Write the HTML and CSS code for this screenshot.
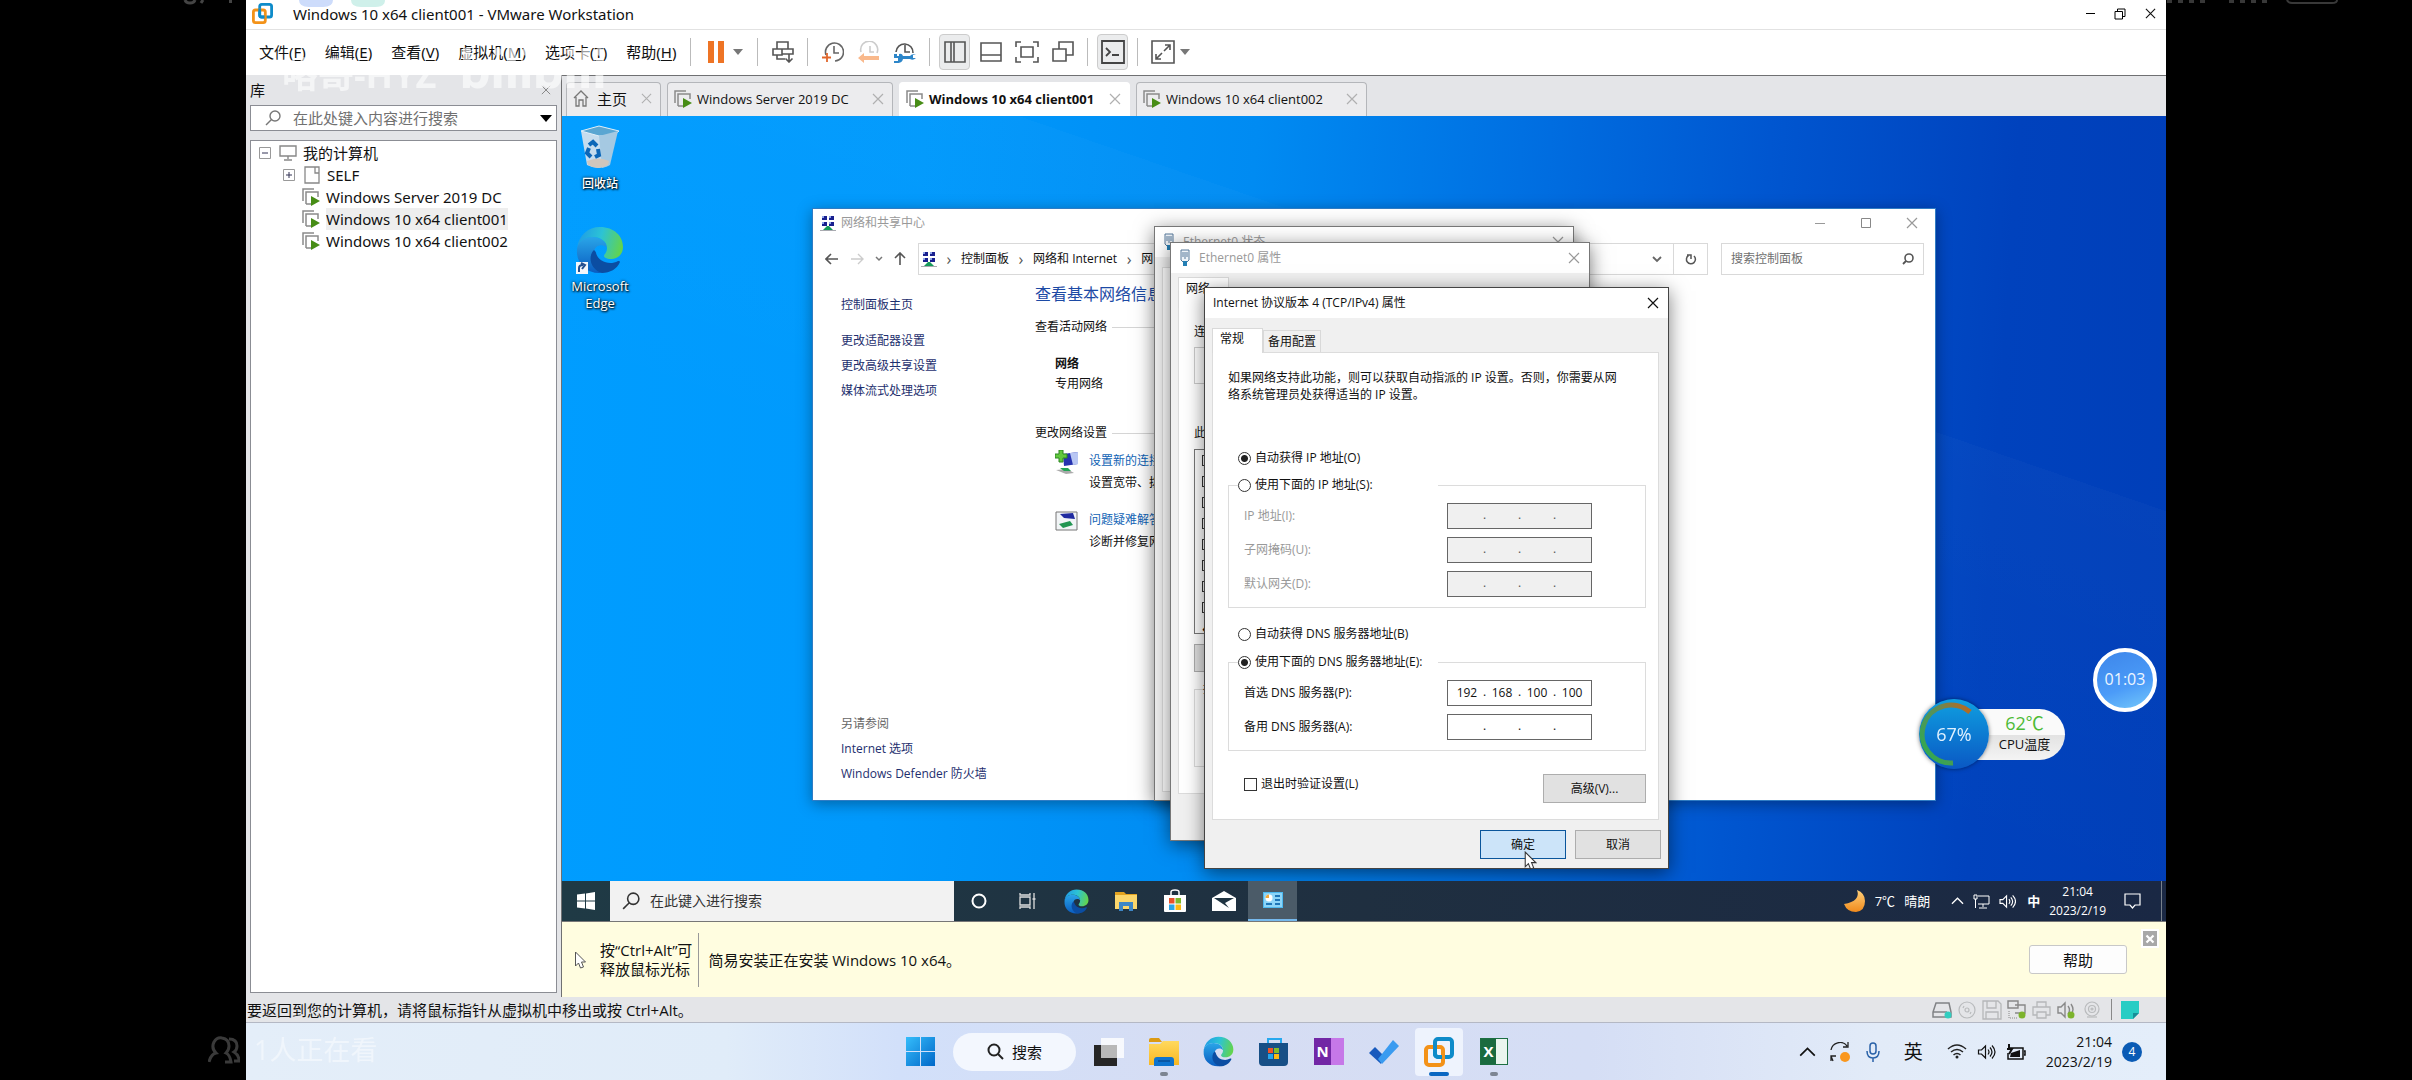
FILE: index.html
```html
<!DOCTYPE html>
<html lang="zh-CN">
<head>
    <meta charset="UTF-8">
    <meta name="viewport" content="width=device-width, initial-scale=1.0">
    <title>Windows 10 x64 client001 - VMware Workstation</title>
    <link rel="stylesheet" href="styles.css">
</head>
<body>

    <!-- Shared icons -->
    <svg class="defs" aria-hidden="true">
        <defs>
            <linearGradient id="edgeTop" x1="0" y1="0.3" x2="1" y2="0.5">
                <stop offset="0" stop-color="#1f9be6"/><stop offset="0.5" stop-color="#2cc3d5"/><stop offset="1" stop-color="#63d44c"/>
            </linearGradient>
            <linearGradient id="edgeSide" x1="0" y1="0" x2="0" y2="1">
                <stop offset="0" stop-color="#2aa5e8"/><stop offset="1" stop-color="#0a5cc0"/>
            </linearGradient>
            <linearGradient id="winBlue" x1="0" y1="0" x2="1" y2="1">
                <stop offset="0" stop-color="#35bdfb"/><stop offset="1" stop-color="#0067c8"/>
            </linearGradient>
            <linearGradient id="folderGold" x1="0" y1="0" x2="0" y2="1">
                <stop offset="0" stop-color="#ffd95e"/><stop offset="1" stop-color="#f8b722"/>
            </linearGradient>
            <linearGradient id="moonGold" x1="0" y1="0" x2="0" y2="1">
                <stop offset="0" stop-color="#ffd07a"/><stop offset="1" stop-color="#f08a1c"/>
            </linearGradient>
            <linearGradient id="cpuArc" x1="1" y1="0" x2="0" y2="1">
                <stop offset="0" stop-color="#c0651c"/><stop offset="0.4" stop-color="#5a8f5a"/><stop offset="1" stop-color="#2aae4f"/>
            </linearGradient>
        </defs>
        <symbol id="edge" viewBox="0 0 48 48">
            <path fill="url(#edgeSide)" d="M1 24C1 16 8 11 16 11c9 0 15 5 15 11-3-4-12-4-13 4-1 9 6 16 14 18-3 2-6 3-9 3C10 47 0 37 1 24z"/>
            <path fill="#0b4da2" d="M18 24c-7 7-3 20 8 23 8 0 15-4 18-11 0-1-1-1-2-1-9 5-20 0-22-8 0-1-1-2-2-3z"/>
            <path fill="url(#edgeTop)" d="M1 22C3 9 12 1 24 1c14 0 23 9 23 20 0 8-6 12-12 12-5 0-7-2-7-3 0-2 3-3 3-8 0-7-7-11-14-11C9 11 3 15 1 22z"/>
        </symbol>
        <symbol id="vmware" viewBox="0 0 30 30">
            <rect x="11" y="2" width="17" height="18" rx="3" fill="none" stroke="#0e8bc9" stroke-width="4"/>
            <rect x="2" y="10" width="17" height="18" rx="3" fill="none" stroke="#f39218" stroke-width="4"/>
            <path d="M11 8v9a3 3 0 0 0 3 3h4" fill="none" stroke="#0e8bc9" stroke-width="4"/>
        </symbol>
        <symbol id="vm" viewBox="0 0 18 18">
            <path d="M1 13V1h11M4 16V4h12v5M4 16h5" fill="none" stroke="#8a8a8a" stroke-width="1.5"/>
            <path d="M9 8l9 5-9 5z" fill="#478d16"/>
        </symbol>
        <symbol id="netcenter" viewBox="0 0 16 17">
            <path d="M2 1h5v4H2zM9 1h5v4H9zM2 7h5v4H2zM9 7h5v4H9z" fill="#19208f"/>
            <path d="M2 1h2v2H2zM9 1h2v2H9zM2 7h2v2H2zM9 7h2v2H9z" fill="#8fa5e8"/>
            <path d="M7 11h2l4 4H3z" fill="#169a5a"/><path d="M0 15h16v1H0z" fill="#a8aab0"/>
        </symbol>
        <symbol id="plug" viewBox="0 0 12 18">
            <path d="M2 1h8v10l-2 2H4l-2-2z" fill="#eef3f8" stroke="#56799a"/>
            <path d="M4 3v5M6 3v7M8 3v5" stroke="#56799a"/><path d="M4 12h4v5H4z" fill="#247fb4"/>
        </symbol>
        <symbol id="close" viewBox="0 0 12 12">
            <path d="M1 1l10 10M11 1L1 11" fill="none" stroke="currentColor" stroke-width="1.2"/>
        </symbol>
        <symbol id="search" viewBox="0 0 16 16">
            <circle cx="10" cy="6" r="5" fill="none" stroke="currentColor" stroke-width="1.4"/>
            <path d="M6.500 9.500L1 15" stroke="currentColor" stroke-width="1.4"/>
        </symbol>
        <symbol id="pointer" viewBox="0 0 12 18">
            <path d="M1 1v14l3-3 2 5 3-1-2-5h4z" fill="#fff" stroke="currentColor"/>
        </symbol>
        <symbol id="volume" viewBox="0 0 18 16">
            <path d="M1 6v4h3l4 4V2L4 6z" fill="none" stroke="currentColor" stroke-width="1.2"/>
            <path d="M10.500 5.500q2 2.500 0 5M12.500 3.500q4 4.500 0 9M14.500 1.500q6 6.500 0 13" fill="none" stroke="currentColor" stroke-width="1.2"/>
        </symbol>
        <symbol id="clock" viewBox="0 0 22 22">
            <path d="M4 14A9 9 0 1 1 13 20M12 5v7h5" fill="none" stroke="currentColor" stroke-width="1.6"/>
        </symbol>
        <symbol id="up" viewBox="0 0 14 8">
            <path d="M1 7l6-6 6 6" fill="none" stroke="currentColor" stroke-width="1.4"/>
        </symbol>
    </svg>

    <main class="screen">
        <header class="titlebar">
            <svg class="app-icon"><use href="#vmware"/></svg>
            <span>Windows 10 x64 client001 - VMware Workstation</span>
            <div class="title-buttons">
                <button aria-label="最小化"><svg width="11" height="11" viewBox="0 0 11 11"><path d="M1 5.500h9" stroke="#000"/></svg></button>
                <button aria-label="还原"><svg width="12" height="12" viewBox="0 0 12 12"><path d="M1 3.500h7.500v7.500H1zM3.500 3V1H11v7.500H9" fill="none" stroke="#000"/></svg></button>
                <button aria-label="关闭"><svg width="11" height="11"><use href="#close"/></svg></button>
            </div>
        </header>

        <div class="toolbar">
            <nav class="menus">
                <button>文件(<u>F</u>)</button>
                <button>编辑(<u>E</u>)</button>
                <button>查看(<u>V</u>)</button>
                <button>虚拟机(<u>M</u>)</button>
                <button>选项卡(<u>T</u>)</button>
                <button>帮助(<u>H</u>)</button>
            </nav>
            <div class="tools">
                <button aria-label="挂起"><svg width="18" height="22"><path d="M1 0h6v22H1zM11 0h6v22h-6z" fill="#ee7425"/></svg></button>
                <button class="caret" aria-label="电源选项"></button>
            </div>
            <div class="tools">
                <button aria-label="发送按键"><svg width="22" height="22" viewBox="0 0 22 22" fill="none" stroke="#555" stroke-width="1.6"><path d="M5 8V1h11v7M1 8h9v6H1zM10 8h11v5H10zM5 14v4h8M17 13v8M13.500 17.500L17 21l3.500-3.500"/></svg></button>
            </div>
            <div class="tools">
                <button aria-label="拍摄快照"><svg width="22" height="22" viewBox="0 0 22 22"><g color="#666"><use href="#clock"/></g><path d="M5 12v9M0 16.500h9" stroke="#e0662c" stroke-width="1.8"/></svg></button>
                <button aria-label="恢复快照"><svg width="22" height="22" viewBox="0 0 22 22"><path d="M3 11A8.500 8.500 0 1 1 19 12M12 5v6h4" fill="none" stroke="#ccc" stroke-width="1.600"/><path d="M0 17l6-5v3h15v4H6v3z" fill="#f9b98c"/></svg></button>
                <button aria-label="管理快照"><svg width="22" height="22" viewBox="0 0 22 22"><path d="M2 11A8.500 8.500 0 1 1 19 12M11 4v7h5" fill="none" stroke="#555" stroke-width="1.600"/><path d="M0 13h3v2h2v-2q3-1 4 2h7q2-3 6-1h-3v3h3q-3 3-6 1H9q-1 5-9 4v-2h4v-3H0z" fill="#2d86c9"/></svg></button>
            </div>
            <div class="tools">
                <button class="selected" aria-label="显示库"><svg width="22" height="22" viewBox="0 0 22 22" fill="none" stroke="#555" stroke-width="1.6"><path d="M1 1h20v20H1zM7 1v20M10 1v20"/></svg></button>
                <button aria-label="缩略图栏"><svg width="22" height="20" viewBox="0 0 22 20" fill="none" stroke="#555" stroke-width="1.600"><path d="M1 1h20v18H1zM1 13h20"/></svg></button>
                <button aria-label="全屏"><svg width="24" height="22" viewBox="0 0 24 22" fill="none" stroke="#555" stroke-width="1.6"><path d="M1 6V1h5M18 1h5v5M23 16v5h-5M6 21H1v-5M6 6h12v10H6z"/></svg></button>
                <button aria-label="Unity"><svg width="22" height="22" viewBox="0 0 22 22" fill="none" stroke="#555" stroke-width="1.6"><path d="M1 8h13v12H1zM7 8V1h14v13h-7"/></svg></button>
            </div>
            <div class="tools">
                <button class="selected" aria-label="控制台"><svg width="24" height="24" viewBox="0 0 24 24" fill="none" stroke="#444" stroke-width="1.8"><path d="M1 1h22v22H1zM5 8l4 4-4 4M11 15h7"/></svg></button>
            </div>
            <div class="tools">
                <button aria-label="拉伸"><svg width="24" height="24" viewBox="0 0 24 24" fill="none" stroke="#555" stroke-width="1.6"><path d="M1 1h22v22H1z"/><path d="M14 5h5v5M19 5l-6 6M10 19H5v-5M5 19l6-6"/></svg></button>
                <button class="caret" aria-label="拉伸选项"></button>
            </div>
        </div>

        <div class="workspace">
            <aside class="library">
                <div class="library-head">
                    <span>库</span>
                    <button aria-label="关闭库"><svg width="10" height="10"><use href="#close"/></svg></button>
                </div>
                <label class="library-search">
                    <svg width="16" height="16"><use href="#search"/></svg>
                    <input type="text" placeholder="在此处键入内容进行搜索" aria-label="搜索库">
                    <span class="drop"></span>
                </label>
                <ul class="tree">
                    <li>
                        <svg class="box" viewBox="0 0 12 12"><path d="M.5.5h11v11H.5z" fill="#fff" stroke="#999"/><path d="M3 6h6" stroke="#335"/></svg>
                        <svg width="18" height="16" viewBox="0 0 18 16"><path d="M1 1h16v10H1zM9 11v3M5 15h8" fill="none" stroke="#888" stroke-width="1.4"/></svg>
                        <span>我的计算机</span>
                    </li>
                    <li class="sub">
                        <svg class="box" viewBox="0 0 12 12"><path d="M.5.5h11v11H.5z" fill="#fff" stroke="#999"/><path d="M3 6h6M6 3v6" stroke="#335"/></svg>
                        <svg width="18" height="18" viewBox="0 0 18 18"><path d="M2 1h14v16H2zM12 1v6h4" fill="none" stroke="#888" stroke-width="1.3"/></svg>
                        <span>SELF</span>
                    </li>
                    <li class="leaf"><svg width="18" height="18"><use href="#vm"/></svg><span>Windows Server 2019 DC</span></li>
                    <li class="leaf current"><svg width="18" height="18"><use href="#vm"/></svg><span>Windows 10 x64 client001</span></li>
                    <li class="leaf"><svg width="18" height="18"><use href="#vm"/></svg><span>Windows 10 x64 client002</span></li>
                </ul>
            </aside>

            <section class="console">
                <div class="tabs">
                    <div class="tab home">
                        <svg width="16" height="17" viewBox="0 0 16 17"><path d="M1 8l7-7 7 7M3 7v9h3v-6h4v6h3V7" fill="none" stroke="#777" stroke-width="1.3"/></svg>
                        <span>主页</span>
                        <button aria-label="关闭"><svg width="11" height="11"><use href="#close"/></svg></button>
                    </div>
                    <div class="tab server">
                        <svg width="18" height="18"><use href="#vm"/></svg>
                        <span>Windows Server 2019 DC</span>
                        <button aria-label="关闭"><svg width="12" height="12"><use href="#close"/></svg></button>
                    </div>
                    <div class="tab active">
                        <svg width="18" height="18"><use href="#vm"/></svg>
                        <span>Windows 10 x64 client001</span>
                        <button aria-label="关闭"><svg width="12" height="12"><use href="#close"/></svg></button>
                    </div>
                    <div class="tab">
                        <svg width="18" height="18"><use href="#vm"/></svg>
                        <span>Windows 10 x64 client002</span>
                        <button aria-label="关闭"><svg width="12" height="12"><use href="#close"/></svg></button>
                    </div>
                </div>

                <div class="desktop">
                    <div class="shortcut">
                        <svg width="42" height="46" viewBox="0 0 42 46">
                            <path d="M2 6l6 34q12 6 22 0l8-34-18 4z" fill="#c5dcee"/>
                            <path d="M2 6l18-5 20 5-6 5H20z" fill="#5aa6d2" stroke="#e2eff8"/>
                            <path d="M20 11l3 32q5-1 8-3l8-34z" fill="#a5c9e2"/>
                            <path d="M8 36q12-5 22 0l-1 4q-10 6-20 0z" fill="#cfc6bd"/>
                            <path d="M10 20l4-3 4 4M19 24l1 6-4 2M12 32l-4-4 2-5" fill="none" stroke="#0c67b8" stroke-width="4"/>
                        </svg>
                        <span>回收站</span>
                    </div>
                    <div class="shortcut edge">
                        <svg width="50" height="50" viewBox="0 0 50 50"><use href="#edge" x="1" y="0" width="48" height="48"/><path d="M1 36h12v12H1z" fill="#f4f7fb"/><path d="M4 46v-4q0-3 4-3M6 37l4 2-3 4" fill="none" stroke="#26508f" stroke-width="2"/></svg>
                        <span>Microsoft Edge</span>
                    </div>

                    <section class="window network">
                        <div class="window-title">
                            <svg width="16" height="17"><use href="#netcenter"/></svg>
                            <span>网络和共享中心</span>
                            <button aria-label="最小化"><svg width="11" height="11" viewBox="0 0 11 11"><path d="M0 5.500h10" stroke="#999"/></svg></button>
                            <button aria-label="最大化"><svg width="11" height="11" viewBox="0 0 11 11"><path d="M.5.5h9v9h-9z" fill="none" stroke="#888"/></svg></button>
                            <button aria-label="关闭"><svg width="12" height="12"><use href="#close"/></svg></button>
                        </div>
                        <div class="address-row">
                            <div class="history">
                                <svg width="14" height="12" viewBox="0 0 14 12"><path d="M13 6H1M6 1L1 6l5 5" fill="none" stroke="#555" stroke-width="1.6"/></svg>
                                <svg width="14" height="12" viewBox="0 0 14 12"><path d="M1 6h12M8 1l5 5-5 5" fill="none" stroke="#ccc" stroke-width="1.400"/></svg>
                                <svg width="8" height="6" viewBox="0 0 8 6"><path d="M1 1l3 3 3-3" fill="none" stroke="#777" stroke-width="1.500"/></svg>
                                <svg width="12" height="14" viewBox="0 0 12 14"><path d="M6 13V1M1 6l5-5 5 5" fill="none" stroke="#555" stroke-width="1.6"/></svg>
                            </div>
                            <div class="address">
                                <svg width="16" height="17"><use href="#netcenter"/></svg>
                                <i>›</i><span>控制面板</span><i>›</i><span>网络和 Internet</span><i>›</i><span>网</span>
                                <svg class="more" width="10" height="8" viewBox="0 0 10 8"><path d="M1 2l4 4 4-4" fill="none" stroke="#666" stroke-width="1.8"/></svg>
                                <button aria-label="刷新"><svg width="12" height="13" viewBox="0 0 12 13"><path d="M3.500 2.500A4.500 4.500 0 1 0 9 3M2 2h4v4" fill="none" stroke="#555" stroke-width="1.5"/></svg></button>
                            </div>
                            <label class="panel-search">
                                <input type="text" placeholder="搜索控制面板" aria-label="搜索控制面板">
                                <svg width="12" height="12" viewBox="0 0 12 12"><circle cx="7" cy="5" r="4" fill="none" stroke="#555" stroke-width="1.600"/><path d="M4 8l-3 3" stroke="#555" stroke-width="1.800"/></svg>
                            </label>
                        </div>
                        <div class="window-body">
                            <nav class="side-links">
                                <a href="#">控制面板主页</a>
                                <a class="first" href="#">更改适配器设置</a>
                                <a href="#">更改高级共享设置</a>
                                <a href="#">媒体流式处理选项</a>
                                <span class="see-also">另请参阅</span>
                                <a href="#">Internet 选项</a>
                                <a href="#">Windows Defender 防火墙</a>
                            </nav>
                            <div class="overview">
                                <h1>查看基本网络信息</h1>
                                <h2>查看活动网络</h2>
                                <div class="active-network"><strong>网络</strong><span>专用网络</span></div>
                                <h2>更改网络设置</h2>
                                <div class="task">
                                    <svg width="24" height="24" viewBox="0 0 24 24"><path d="M8 4l15-2v12l-14 2z" fill="#2633b0"/><path d="M15 3l8-1v12l-5 1z" fill="#b8c6f3"/><path d="M1 20l11-1 7 4-8 1z" fill="#aaa"/><path d="M5 18l8 0 3 3-7 0z" fill="#23a455"/><path d="M4 0h4v4h4v4H8v4H4V8H0V4h4z" fill="#62c83e" stroke="#2c8622"/></svg>
                                    <div><a href="#">设置新的连接</a><span>设置宽带、拨</span></div>
                                </div>
                                <div class="task">
                                    <svg width="24" height="24" viewBox="0 0 24 24"><path d="M1 3h21v18H1z" fill="#f2f5f7" stroke="#777"/><path d="M5 5l13-1 2 6-11-1z" fill="#202ba0"/><path d="M4 15l11-3 3 4-10 3z" fill="#229652"/></svg>
                                    <div><a href="#">问题疑难解答</a><span>诊断并修复网</span></div>
                                </div>
                            </div>
                        </div>
                    </section>

                    <section class="window dialog status-dialog">
                        <div class="window-title">
                            <svg width="12" height="18"><use href="#plug"/></svg>
                            <span>Ethernet0 状态</span>
                            <button aria-label="关闭"><svg width="12" height="12"><use href="#close"/></svg></button>
                        </div>
                        <div class="sheet"></div>
                    </section>

                    <section class="window dialog adapter-dialog">
                        <div class="window-title">
                            <svg width="12" height="18"><use href="#plug"/></svg>
                            <span>Ethernet0 属性</span>
                            <button aria-label="关闭"><svg width="12" height="12"><use href="#close"/></svg></button>
                        </div>
                        <div class="sheet-tabs"><button class="on">网络</button></div>
                        <div class="sheet">
                            <span>连</span>
                            <div class="adapter-name"></div>
                            <span>此</span>
                            <div class="components">
                                <input type="checkbox" checked aria-label="组件 1">
                                <input type="checkbox" checked aria-label="组件 2">
                                <input type="checkbox" checked aria-label="组件 3">
                                <input type="checkbox" checked aria-label="组件 4">
                                <input type="checkbox" aria-label="组件 5">
                                <input type="checkbox" checked aria-label="组件 6">
                                <input type="checkbox" checked aria-label="组件 7">
                                <input type="checkbox" checked aria-label="组件 8">
                                <b>‹</b>
                            </div>
                            <div class="install"></div>
                            <fieldset class="describe"><legend>描</legend></fieldset>
                        </div>
                    </section>

                    <section class="window dialog ipv4-dialog">
                        <div class="window-title">
                            <span>Internet 协议版本 4 (TCP/IPv4) 属性</span>
                            <button aria-label="关闭"><svg width="12" height="12"><use href="#close"/></svg></button>
                        </div>
                        <div class="sheet-tabs">
                            <button class="on">常规</button>
                            <button>备用配置</button>
                        </div>
                        <form class="sheet">
                            <p>如果网络支持此功能，则可以获取自动指派的 IP 设置。否则，你需要从网络系统管理员处获得适当的 IP 设置。</p>
                            <label class="choice auto-ip"><input type="radio" name="ip" checked>自动获得 IP 地址(O)</label>
                            <fieldset>
                                <legend><label class="choice"><input type="radio" name="ip">使用下面的 IP 地址(S):</label></legend>
                                <div class="field off">
                                    <label for="ip1">IP 地址(I):</label>
                                    <div class="ip"><input id="ip1" disabled>.<input disabled aria-label="IP 2">.<input disabled aria-label="IP 3">.<input disabled aria-label="IP 4"></div>
                                </div>
                                <div class="field off">
                                    <label for="mask1">子网掩码(U):</label>
                                    <div class="ip"><input id="mask1" disabled>.<input disabled aria-label="掩码 2">.<input disabled aria-label="掩码 3">.<input disabled aria-label="掩码 4"></div>
                                </div>
                                <div class="field off">
                                    <label for="gw1">默认网关(D):</label>
                                    <div class="ip"><input id="gw1" disabled>.<input disabled aria-label="网关 2">.<input disabled aria-label="网关 3">.<input disabled aria-label="网关 4"></div>
                                </div>
                            </fieldset>
                            <label class="choice auto-dns"><input type="radio" name="dns">自动获得 DNS 服务器地址(B)</label>
                            <fieldset>
                                <legend><label class="choice"><input type="radio" name="dns" checked>使用下面的 DNS 服务器地址(E):</label></legend>
                                <div class="field">
                                    <label for="dns1">首选 DNS 服务器(P):</label>
                                    <div class="ip"><input id="dns1" value="192">.<input value="168" aria-label="首选 2">.<input value="100" aria-label="首选 3">.<input value="100" aria-label="首选 4"></div>
                                </div>
                                <div class="field">
                                    <label for="alt1">备用 DNS 服务器(A):</label>
                                    <div class="ip"><input id="alt1">.<input aria-label="备用 2">.<input aria-label="备用 3">.<input aria-label="备用 4"></div>
                                </div>
                            </fieldset>
                            <div class="extra">
                                <label class="choice"><input type="checkbox">退出时验证设置(L)</label>
                                <button type="button" class="push">高级(V)...</button>
                            </div>
                        </form>
                        <div class="actions">
                            <button class="push default">确定</button>
                            <button class="push">取消</button>
                        </div>
                        <svg class="cursor" width="13" height="19"><use href="#pointer"/></svg>
                    </section>

                    <div class="cpu-meter">
                        <div class="cpu-ball">
                            <svg viewBox="0 0 70 70"><path d="M51 13A29 29 0 1 0 34 64" fill="none" stroke="url(#cpuArc)" stroke-width="5"/></svg>
                            <span>67%</span>
                        </div>
                        <div class="cpu-temp"><b>62℃</b><span>CPU温度</span></div>
                    </div>
                    <div class="timer">01:03</div>
                </div>

                <div class="guest-bar">
                    <button class="start" aria-label="开始"><svg width="18" height="18" viewBox="0 0 18 18"><path d="M0 2.500L8 1.500V8.500H0zM9 1.400L18 0v8.500H9zM0 9.500h8v7L0 15.500zM9 9.500h9V18l-9-1.400z" fill="#fff"/></svg></button>
                    <label class="guest-search">
                        <svg width="18" height="18"><use href="#search"/></svg>
                        <input type="text" placeholder="在此键入进行搜索" aria-label="在此键入进行搜索">
                    </label>
                    <button class="pin" aria-label="Cortana"><svg width="16" height="16"><circle cx="8" cy="8" r="6.500" fill="none" stroke="#fff" stroke-width="2"/></svg></button>
                    <button class="pin" aria-label="任务视图"><svg width="18" height="18" viewBox="0 0 18 18"><path d="M1 5h10v8H1zM1 1v2h10V1M1 17v-2h10v2M15 1v16M13.500 7h3" fill="none" stroke="#ddd" stroke-width="1.300"/></svg></button>
                    <button class="pin" aria-label="Edge"><svg width="25" height="25"><use href="#edge"/></svg></button>
                    <button class="pin" aria-label="文件资源管理器"><svg width="22" height="20" viewBox="0 0 22 20"><path d="M0 1h9l2 2h11v15H0z" fill="#e3a320"/><path d="M0 4h22v14H0z" fill="#fbd66b"/><path d="M4 20v-9h14v9h-4v-5H8v5z" fill="#3d86c6"/></svg></button>
                    <button class="pin" aria-label="Microsoft Store"><svg width="24" height="24" viewBox="0 0 24 24"><path d="M8 7V3q0-2 4-2t4 2v4" fill="none" stroke="#fff" stroke-width="1.5"/><path d="M1 6h22v16q0 1-1 1H2q-1 0-1-1z" fill="#fff"/><path d="M6 9h5.500v5.500H6z" fill="#e8502a"/><path d="M12.500 9H18v5.500h-5.500z" fill="#7db82b"/><path d="M6 15.500h5.500V21H6z" fill="#29a4e6"/><path d="M12.500 15.500H18V21h-5.500z" fill="#fbb812"/></svg></button>
                    <button class="pin" aria-label="邮件"><svg width="24" height="20" viewBox="0 0 24 20"><path d="M0 7l12-7 12 7v13H0z" fill="#fff"/><path d="M2 7h20l-9 5 4 5-6-4z" fill="#1f3442"/></svg></button>
                    <button class="pin running" aria-label="控制面板"><svg width="20" height="16" viewBox="0 0 20 16"><path d="M0 0h20v16H0z" fill="#4db9f0"/><path d="M1 1h18v14H1z" fill="#8cd4f7"/><circle cx="6" cy="6" r="3.500" fill="#fff"/><path d="M6 6V2.500A3.500 3.500 0 0 0 2.500 6z" fill="#f5a93a"/><path d="M12 3h5v2h-5zM12 7h5v2h-5zM12 11h5v2h-5zM3 11h6v2H3z" fill="#1e76b8"/></svg></button>
                    <div class="guest-tray">
                        <svg width="23" height="23" viewBox="0 0 23 23"><path d="M14 0q4 11-13 14 3 8 12 8 9-1 9-11 0-8-8-11z" fill="url(#moonGold)"/></svg>
                        <span class="weather">7℃</span><span>晴朗</span>
                        <svg class="tray-up" width="13" height="8"><use href="#up"/></svg>
                        <svg width="17" height="15" viewBox="0 0 17 15"><path d="M5 2h11v8H5M10 10v3M6 14h8M1 1h3v4H1zM2.500 5v9" fill="none" stroke="#fff"/></svg>
                        <svg width="17" height="15"><use href="#volume"/></svg>
                        <span class="ime">中</span>
                        <time>21:04<br>2023/2/19</time>
                        <svg width="17" height="17" viewBox="0 0 17 17"><path d="M1 1h15v11h-5l-2.500 3L6 12H1z" fill="none" stroke="#fff" stroke-width="1.200"/></svg>
                    </div>
                </div>

                <div class="notice">
                    <svg class="arrow" width="13" height="18"><use href="#pointer"/></svg>
                    <p class="release">按“Ctrl+Alt”可<br>释放鼠标光标</p>
                    <p>简易安装正在安装 Windows 10 x64。</p>
                    <button class="help">帮助</button>
                    <button class="dismiss" aria-label="关闭"><svg width="10" height="10" viewBox="0 0 10 10"><path d="M1.500 1.500l7 7M8.500 1.500l-7 7" stroke="#fff" stroke-width="2.200"/></svg></button>
                </div>
            </section>
        </div>

        <footer class="statusbar">
            <span>要返回到您的计算机，请将鼠标指针从虚拟机中移出或按 Ctrl+Alt。</span>
            <div class="devices">
                <svg width="20" height="18" viewBox="0 0 20 18"><path d="M4 2h13l2 9v5H1v-5zM1 11h14" fill="none" stroke="#808285" stroke-width="1.500"/><circle cx="16" cy="14" r="3.500" fill="#31cdbf"/></svg>
                <svg width="20" height="18" viewBox="0 0 20 18" fill="none" stroke="#b9bbbd" stroke-width="1.200"><circle cx="10" cy="9" r="8"/><circle cx="10" cy="9" r="2"/><path d="M6 7l1-2M13 13l1-2"/></svg>
                <svg width="20" height="20" viewBox="0 0 20 20" fill="none" stroke="#b5b7b9" stroke-width="1.300"><path d="M1 1h15l3 3v15H1zM5 1v7h9V1M4 19v-7h12v7"/></svg>
                <svg width="20" height="20" viewBox="0 0 20 20"><path d="M1 1h10v7H1zM8 5h10v8H8" fill="none" stroke="#888" stroke-width="1.400"/><path d="M2 11v7h8" fill="none" stroke="#888" stroke-dasharray="1 1"/><circle cx="15" cy="15" r="3.500" fill="#7db32c"/></svg>
                <svg width="20" height="18" viewBox="0 0 20 18" fill="none" stroke="#b5b7b9" stroke-width="1.300"><path d="M5 6V1h9v5M5 14H1V6h17v8h-4M5 11h9v6H5z"/></svg>
                <svg width="20" height="18" viewBox="0 0 20 18"><path d="M1 6v6h3l4 4V2L4 6zM11 5q3 4 0 8M14 3q4 6 0 10" fill="none" stroke="#888" stroke-width="1.400"/><circle cx="14" cy="14" r="3.500" fill="#7db32c"/></svg>
                <svg width="20" height="18" viewBox="0 0 20 18" fill="none" stroke="#b9bbbd" stroke-width="1.200"><circle cx="10" cy="8" r="7"/><circle cx="10" cy="8" r="3.500"/><circle cx="10" cy="8" r="1"/><path d="M5 16h10"/></svg>
                <i></i>
                <svg width="18" height="18" viewBox="0 0 18 18"><path d="M0 0h18v12l-6 6H0z" fill="#27cdc4"/><path d="M12 18v-6h6z" fill="#188f98"/></svg>
            </div>
        </footer>

        <footer class="host-bar">
            <div class="host-apps">
                <button class="app" aria-label="开始"><svg width="30" height="30" viewBox="0 0 30 30"><path d="M0 0h14v14H0zM15 0h14v14H15zM0 15h14v14H0zM15 15h14v14H15z" fill="url(#winBlue)"/></svg></button>
                <button class="host-search"><svg width="17" height="17" viewBox="0 0 17 17"><circle cx="7" cy="7" r="5.500" fill="none" stroke="#222" stroke-width="2"/><path d="M11 11l5 5" stroke="#222" stroke-width="2"/></svg>搜索</button>
                <button class="app" aria-label="任务视图"><svg width="30" height="28" viewBox="0 0 30 28"><path d="M0 7h23v21H0z" fill="#262626"/><path d="M7 0h23v20H7z" fill="#fff" fill-opacity=".8"/><path d="M7 7h16v13H7z" fill="#b8b8b8"/></svg></button>
                <button class="app dot" aria-label="文件资源管理器"><svg width="30" height="28" viewBox="0 0 30 28"><path d="M0 2q0-2 2-2h8l3 4H0z" fill="#dc9a12"/><path d="M0 6h11l3-3h16v24H0z" fill="url(#folderGold)"/><path d="M5 28v-6q0-3 3-3h14q3 0 3 3v6z" fill="#0e74cf"/><path d="M9 23h12" stroke="#0a4f97" stroke-width="1.500"/></svg></button>
                <button class="app" aria-label="Edge"><svg width="31" height="31"><use href="#edge"/></svg></button>
                <button class="app" aria-label="Microsoft Store"><svg width="30" height="30" viewBox="0 0 30 30"><path d="M9 7V2h13v5" fill="none" stroke="#27a8ee" stroke-width="2"/><path d="M0 6h29v19q0 4-4 4H4q-4 0-4-4z" fill="#174f86"/><path d="M9 11h5v5H9z" fill="#ef5327"/><path d="M15 11h5v5h-5z" fill="#80bb2a"/><path d="M9 17h5v5H9z" fill="#25a5ec"/><path d="M15 17h5v5h-5z" fill="#fdb913"/></svg></button>
                <button class="app" aria-label="OneNote"><span class="onenote">N</span></button>
                <button class="app" aria-label="To Do"><svg width="30" height="24" viewBox="0 0 30 24"><path d="M0 13l6-6 8 8-2 9z" fill="#185abd"/><path d="M9 19L24 0l6 6-17 18z" fill="#3a9bf0"/></svg></button>
                <button class="app open" aria-label="VMware"><svg width="30" height="30"><use href="#vmware"/></svg></button>
                <button class="app dot" aria-label="Excel"><span class="excel">X</span></button>
            </div>
            <div class="host-tray">
                <svg width="17" height="10"><use href="#up"/></svg>
                <svg width="20" height="20" viewBox="0 0 20 20"><path d="M1 8a9 9 0 0 1 16-4M18 0v5h-5M1 14l2 5M1 19v-5h5" fill="none" stroke="#222" stroke-width="1.300"/><circle cx="15" cy="15" r="5" fill="#f9971e"/></svg>
                <svg width="14" height="20" viewBox="0 0 14 20"><rect x="4" y="1" width="6" height="11" rx="3" fill="none" stroke="#2a62a8" stroke-width="1.500"/><path d="M1 9q0 7 6 7t6-7M7 16v4" fill="none" stroke="#2a62a8" stroke-width="1.500"/></svg>
                <span class="ime">英</span>
                <svg width="20" height="15" viewBox="0 0 20 15"><path d="M1 5q9-8 18 0M4 8q6-5 12 0M6.500 11q3.500-3 7 0" fill="none" stroke="#222" stroke-width="1.500"/><circle cx="10" cy="13" r="1.500" fill="#222"/></svg>
                <svg width="19" height="16"><use href="#volume"/></svg>
                <svg width="20" height="16" viewBox="0 0 20 16"><path d="M3 4h14v11H2V9M18 7h1v4h-1" fill="none" stroke="#111" stroke-width="1.500"/><path d="M5 9l9-3v7H4z" fill="#111"/><path d="M3 0v4M1 5h5l-3 5" stroke="#111" stroke-width="2" fill="none"/></svg>
                <time>21:04<br>2023/2/19</time>
                <span class="badge">4</span>
            </div>
        </footer>
    </main>

    <!-- Live stream overlay, lies over the shared screen -->
    <div class="overlay" aria-hidden="true">
        <span class="streamer">咯哥-HYZ</span>
        <span class="brand">bilibili</span>
        <span class="viewers">
            <svg width="32" height="30" viewBox="0 0 32 30"><path d="M1 27q2-8 7-9-5-5-2-11 3-5 8-4 7 1 7 8 0 4-3 7 4 2 5 9h-6M21 4q8 0 8 7 0 4-3 6 5 3 5 9h-5" fill="none" stroke="#3a3a3a" stroke-width="3"/></svg>
            1人正在看
        </span>
        <svg class="phone-left" width="220" height="12" viewBox="0 0 220 12">
            <path d="M2 0q1 3 5 3t5-3M18 3l2-3" fill="none" stroke="#444" stroke-width="3"/><path d="M46 0h3v3h-3z" fill="#444"/>
            <path d="M116 0h34q0 7-10 7h-14q-10 0-10-7z" fill="#cddcfb"/><path d="M168 0h34q0 7-10 7h-14q-10 0-10-7z" fill="#cff0ea"/>
        </svg>
        <svg class="phone-right" width="172" height="5" viewBox="0 0 172 5">
            <path d="M0 0h5v3H0zM11 0h5v3h-5zM22 0h5v3h-5zM33 0h5v3h-5zM62 0h5v3h-5zM73 0h5v3h-5zM84 0h5v3h-5zM95 0h5v3h-5z" fill="#383838"/>
            <path d="M120 0q1 3 5 3h40q5 0 5-3" fill="none" stroke="#383838" stroke-width="2"/>
        </svg>
    </div>

</body>
</html>
```
FILE: styles.css
```css
:root {
    --chrome: #e4e5e8;
    --line: #8b8d94;
    --dialog: #f0f0f0;
    --link: #0f63b5;
    --nav: #1e2f6e;
    --ui: "Open Sans", "Noto Sans CJK SC", sans-serif;
    --ui-wide: "Noto Sans", "Noto Sans CJK SC", sans-serif;
}

* {
    box-sizing: border-box;
}

html, body {
    height: 100%;
    margin: 0;
}

body {
    display: grid;
    grid-template-columns: 246px 1fr 246px;
    background: #000;
    color: #111;
    font-family: var(--ui);
    font-size: 15px;
    line-height: 20px;
    overflow: hidden;
}

button, input {
    font: inherit;
    color: inherit;
    margin: 0;
    padding: 0;
    border: 0;
    background: none;
    border-radius: 0;
    outline: none;
}

button {
    display: flex;
    align-items: center;
    justify-content: center;
}

input {
    min-width: 0;
}

p, h1, h2, ul {
    margin: 0;
    padding: 0;
}

svg {
    display: block;
    flex-shrink: 0;
}

a {
    color: inherit;
    text-decoration: none;
}

.defs {
    position: absolute;
    width: 0;
    height: 0;
}

.screen {
    grid-column: 2;
    display: flex;
    flex-direction: column;
    height: 100vh;
    min-width: 0;
    background: #fff;
}

/* VMware window */
.titlebar {
    display: flex;
    align-items: center;
    height: 30px;
    padding: 0 1px 2px 6px;
    border-bottom: 1px solid #e2e2e2;
    font-family: var(--ui-wide);
}

.app-icon {
    width: 21px;
    height: 21px;
    margin-right: 20px;
}

.title-buttons {
    display: flex;
    margin-left: auto;
}

.title-buttons button {
    width: 30px;
    height: 26px;
}

.toolbar {
    display: flex;
    align-items: center;
    height: 45px;
    padding: 0 0 2px 13px;
}

.menus {
    display: flex;
    gap: 19px;
    margin-right: 14px;
    font-family: var(--ui-wide);
}

.menus u {
    text-underline-offset: 2px;
}

.tools {
    display: flex;
    align-items: center;
    gap: 5px;
    height: 28px;
    padding: 0 9px;
    border-left: 1px solid #bbb;
}

.tools button {
    width: 31px;
    height: 36px;
}

.tools .selected {
    background: #ebeced;
    border: 1px solid #ccc;
    border-radius: 4px;
}

.tools .caret {
    width: 12px;
    margin-right: 4px;
    margin-left: -4px;
}

.caret::after,
.drop {
    content: "";
    border: 5px solid transparent;
    border-top: 6px solid #777;
    border-bottom: 0;
}

.workspace {
    flex: 1;
    display: grid;
    grid-template-columns: 315px 1fr;
    min-height: 0;
    background: var(--chrome);
}

.library {
    display: flex;
    flex-direction: column;
    padding: 0 4px 4px;
}

.library-head {
    display: flex;
    justify-content: space-between;
    align-items: center;
    height: 30px;
    padding-right: 6px;
}

.library-head button {
    color: #888;
}

.library-search {
    display: flex;
    align-items: center;
    gap: 12px;
    height: 26px;
    padding: 0 4px 0 14px;
    border: 1px solid var(--line);
    background: #fff;
    color: #777;
}

.library-search input {
    flex: 1;
}

::placeholder {
    color: #707070;
    opacity: 1;
}

.drop {
    border-width: 7px 6px 0;
    border-top-color: #000;
}

.tree {
    flex: 1;
    margin-top: 9px;
    padding: 1px 8px;
    border: 1px solid var(--line);
    background: #fff;
    font-family: var(--ui-wide);
    list-style: none;
}

.tree li {
    display: flex;
    align-items: center;
    gap: 6px;
    height: 22px;
    line-height: 22px;
    white-space: nowrap;
}

.tree .box {
    width: 12px;
    height: 12px;
    margin-right: 2px;
}

.tree .sub {
    padding-left: 24px;
}

.tree .leaf {
    padding-left: 43px;
}

.tree .current span {
    background: #eee;
}

.console {
    display: flex;
    flex-direction: column;
    min-width: 0;
    border-top: 1px solid #6f7072;
    border-left: 1px solid #6f7072;
}

.tabs {
    display: flex;
    gap: 6px;
    padding: 6px 4px 0;
    font-size: 13px;
}

.tab {
    display: flex;
    align-items: center;
    gap: 5px;
    width: 231px;
    height: 34px;
    padding: 0 8px 2px 6px;
    border: 1px solid #b4b6ba;
    border-bottom: 0;
    border-radius: 4px 4px 0 0;
    background: #ececee;
    white-space: nowrap;
}

.tab button {
    margin-left: auto;
    color: #b0b0b0;
}

.home {
    gap: 8px;
    width: 95px;
    font-size: 15px;
}

.server {
    width: 226px;
}

.active {
    background: #fff;
    border-color: #fff;
    font-weight: bold;
}

/* Guest desktop */
.desktop {
    flex: 1;
    position: relative;
    overflow: hidden;
    background:
        linear-gradient(199deg, transparent 30%, rgba(255, 255, 255, 0.02) 30%, transparent 62%),
        linear-gradient(94deg, #009dff 0%, #0099fc 22%, #008bf2 42%, #0070e2 58%, #0056d0 73%, #0042bd 88%, #003eb8 100%);
    font-size: 12px;
    line-height: 18px;
}

.shortcut {
    position: absolute;
    top: 9px;
    left: 4px;
    width: 68px;
    display: flex;
    flex-direction: column;
    align-items: center;
    gap: 4px;
    color: #fff;
    font-weight: 500;
    text-align: center;
    line-height: 17px;
    text-shadow: 1px 1px 2px #000, 0 0 3px #000;
}

.shortcut.edge {
    top: 110px;
    gap: 2px;
    font-size: 13px;
}

.window {
    position: absolute;
    display: flex;
    flex-direction: column;
    isolation: isolate;
    background: #fff;
    border: 1px solid #6b7f95;
    box-shadow: 0 3px 14px rgba(0, 0, 0, 0.35);
}

.network {
    top: 92px;
    left: 250px;
    width: 1124px;
    height: 593px;
    border-color: #2f7cc4;
}

.window-title {
    display: flex;
    align-items: center;
    height: 30px;
    flex-shrink: 0;
    padding-left: 8px;
    background: #fff;
    color: #999;
}

.window-title svg + span {
    margin-left: 5px;
}

.dialog .window-title svg + span {
    margin-left: 8px;
}

.window-title span {
    flex: 1;
}

.window-title button {
    width: 46px;
    height: 28px;
}

.network .window-title {
    padding-left: 7px;
    padding-bottom: 2px;
}

.address-row {
    display: flex;
    gap: 13px;
    height: 32px;
    margin: 4px 11px 0 12px;
}

.history {
    display: flex;
    align-items: center;
    gap: 11px;
    width: 80px;
}

.address {
    flex: 1;
    display: flex;
    align-items: center;
    padding-left: 2px;
    border: 1px solid #d9d9d9;
}

.address i {
    width: 24px;
    font-style: normal;
    font-size: 16px;
    text-align: center;
    color: #555;
}

.address .more {
    margin: 0 11px 0 auto;
}

.address button {
    width: 34px;
    height: 30px;
    border-left: 1px solid #d9d9d9;
}

.panel-search {
    display: flex;
    align-items: center;
    width: 203px;
    padding: 0 9px;
    border: 1px solid #d9d9d9;
}

.panel-search input {
    flex: 1;
}

.window-body {
    flex: 1;
    display: grid;
    grid-template-columns: 222px 1fr;
}

.side-links {
    display: flex;
    flex-direction: column;
    padding: 17px 0 14px 28px;
    line-height: 25px;
    color: var(--nav);
}

.side-links .first {
    margin-top: 11px;
}

.side-links .see-also {
    margin-top: auto;
    color: #666;
}

.overview {
    padding: 7px 300px 0 0;
}

.overview h1 {
    color: #1c4aa5;
    font-size: 16px;
    font-weight: normal;
    line-height: 24px;
}

.overview h2 {
    display: flex;
    align-items: center;
    gap: 5px;
    margin-top: 9px;
    font-size: 12px;
    font-weight: normal;
    line-height: 24px;
}

.overview h2::after {
    content: "";
    flex: 1;
    border-top: 1px solid #d5d5d5;
}

.active-network {
    display: flex;
    flex-direction: column;
    margin: 15px 0 27px 20px;
    line-height: 20px;
}

.task {
    display: flex;
    align-items: flex-start;
    gap: 10px;
    margin: 5px 0 15px 20px;
    line-height: 22px;
}

.task a,
.task span {
    display: block;
}

.task a {
    color: var(--link);
}

/* Property sheets */
.dialog {
    background: var(--dialog);
    border-color: #777;
    box-shadow: 0 4px 18px rgba(0, 0, 0, 0.5);
}

.status-dialog {
    top: 110px;
    left: 592px;
    width: 420px;
    height: 575px;
}

.adapter-dialog {
    top: 126px;
    left: 608px;
    width: 420px;
    height: 599px;
}

.ipv4-dialog {
    top: 171px;
    left: 642px;
    width: 465px;
    border-color: #444;
}

.dialog .window-title button {
    width: 30px;
}

.ipv4-dialog .window-title {
    color: #111;
}

.sheet-tabs {
    display: flex;
    align-items: flex-end;
    height: 34px;
    margin-left: 7px;
}

.sheet-tabs button {
    height: 22px;
    padding: 0 4px;
    border: 1px solid #d9d9d9;
    border-bottom: 0;
}

.sheet-tabs .on {
    width: 51px;
    height: 25px;
    margin-bottom: -1px;
    padding: 0 0 4px 7px;
    background: #fff;
    justify-content: flex-start;
    z-index: 1;
}

.adapter-dialog .on {
    height: 31px;
    padding-bottom: 9px;
}

.sheet {
    margin: 0 9px 0 7px;
    border: 1px solid #dcdcdc;
    background: #fff;
}

.status-dialog .sheet {
    flex: 1;
    margin-top: 10px;
    margin-bottom: 8px;
}

.adapter-dialog .sheet {
    display: flex;
    flex-direction: column;
    margin-bottom: 46px;
    padding: 15px 15px 26px;
    flex: 1;
}

.adapter-name {
    height: 37px;
    margin: 6px 0 40px;
    border: 1px solid #ccc;
}

.components {
    display: flex;
    flex-direction: column;
    gap: 10px;
    margin-top: 7px;
    padding: 5px 7px 0;
    border: 1px solid #777;
}

.components b {
    line-height: 10px;
    font-size: 16px;
}

.install {
    width: 100px;
    height: 28px;
    margin: 10px 0 8px;
    border: 1px solid #adadad;
    background: #e1e1e1;
}

.sheet fieldset {
    min-width: 0;
    margin: 0;
    padding: 8px 0 10px 9px;
    border: 1px solid #dcdcdc;
}

.sheet .describe {
    flex: 1;
    padding: 0 8px;
}

.ipv4-dialog .sheet {
    padding: 16px 12px 16px 15px;
}

.ipv4-dialog p {
    padding-right: 20px;
    line-height: 17px;
}

legend {
    padding: 0;
}

.ipv4-dialog legend {
    width: 200px;
    height: 20px;
    white-space: nowrap;
}

.choice {
    display: flex;
    align-items: center;
    gap: 4px;
    height: 20px;
}

input[type="radio"],
input[type="checkbox"] {
    appearance: none;
    flex-shrink: 0;
    width: 13px;
    height: 13px;
    border: 1px solid #333;
    background: #fff;
}

input[type="radio"] {
    border-radius: 50%;
}

input[type="radio"]:checked {
    background: radial-gradient(circle, #222 3px, #fff 4px);
}

.components input[type="checkbox"] {
    width: 11px;
    height: 11px;
}

.components input[type="checkbox"]:checked {
    background: radial-gradient(circle at 3px 5px, #222 1px, #fff 2px);
}

.auto-ip {
    margin: 45px 0 7px 10px;
}

.auto-dns {
    margin: 16px 0 8px 10px;
}

.field {
    display: grid;
    grid-template-columns: 203px 145px;
    align-items: center;
    margin-left: 6px;
}

.field + .field {
    margin-top: 8px;
}

.ip {
    display: flex;
    height: 26px;
    padding: 0 3px;
    border: 1px solid #666;
    line-height: 22px;
}

.ip input {
    flex: 1;
    width: 30px;
    text-align: center;
}

.off {
    color: #999;
}

.off .ip {
    background: var(--dialog);
    color: #555;
}

.extra {
    display: flex;
    justify-content: space-between;
    margin-top: 23px;
    padding-left: 16px;
}

.push {
    width: 86px;
    height: 29px;
    border: 1px solid #adadad;
    background: #e1e1e1;
}

.extra .push {
    width: 103px;
}

.push.default {
    border: 1px solid #0a559b;
    background: #cce4f9;
}

.actions {
    display: flex;
    justify-content: flex-end;
    gap: 9px;
    padding: 10px 7px 9px;
}

.cursor {
    position: absolute;
    right: 131px;
    bottom: -2px;
    color: #333;
}

/* Floating gadgets on the desktop */
.cpu-meter {
    position: absolute;
    top: 583px;
    left: 1357px;
    display: flex;
    align-items: center;
}

.cpu-ball {
    position: relative;
    z-index: 1;
    display: grid;
    place-items: center;
    width: 70px;
    height: 70px;
    border-radius: 50%;
    background: linear-gradient(#0f9fe0, #0a58c4);
    box-shadow: 0 0 4px rgba(0, 0, 0, 0.5);
    color: #dff1ff;
    font-size: 18px;
}

.cpu-ball svg,
.cpu-ball span {
    grid-area: 1 / 1;
}

.cpu-ball svg {
    width: 70px;
}

.cpu-temp {
    display: flex;
    flex-direction: column;
    justify-content: center;
    align-items: center;
    width: 105px;
    height: 51px;
    margin-left: -29px;
    padding-left: 24px;
    border-radius: 0 26px 26px 0;
    background: linear-gradient(#fafafa 50%, #e2e2e2 50%, #f4f4f4);
    font-size: 13px;
    line-height: 21px;
}

.cpu-temp b {
    color: #4dba36;
    font-size: 18px;
    font-weight: normal;
}

.timer {
    position: absolute;
    top: 532px;
    left: 1531px;
    width: 64px;
    height: 64px;
    border: 4px solid #fff;
    border-radius: 50%;
    background: linear-gradient(160deg, #3d86ea, #4b9bf8 60%, #74c8fa);
    color: #eef6ff;
    font-size: 16px;
    line-height: 54px;
    text-align: center;
}

/* Guest taskbar */
.guest-bar {
    display: flex;
    height: 41px;
    border-bottom: 1px solid #777;
    background: linear-gradient(90deg, #1f3a45, #1f2f40 50%, #1a2844);
    color: #fff;
    font-size: 13px;
}

.start {
    width: 48px;
}

.guest-search {
    display: flex;
    align-items: center;
    gap: 10px;
    width: 344px;
    padding-left: 12px;
    background: #f2f2f2;
    color: #333;
    font-size: 14px;
}

.guest-search input {
    flex: 1;
}

.guest-search ::placeholder {
    color: #333;
}

.pin {
    width: 49px;
}

.pin.running {
    border-bottom: 2px solid #76b9ed;
    background: #4b5b68;
}

.guest-tray {
    display: flex;
    align-items: center;
    gap: 9px;
    margin: 0 4px 0 auto;
    padding-right: 20px;
    border-right: 1px solid #77808c;
}

.guest-tray .tray-up {
    margin-left: 12px;
}

.guest-tray .ime {
    margin-left: 2px;
    font-weight: bold;
}

.guest-tray time {
    margin-right: 9px;
    line-height: 19px;
    text-align: center;
    font-size: 12px;
}

.notice {
    display: flex;
    align-items: center;
    height: 75px;
    padding: 0 9px 0 12px;
    background: #fffde0;
}

.arrow {
    color: #555;
}

.release {
    margin: 0 9px 0 13px;
    padding: 8px 6px 8px 0;
    border-right: 1px solid #999;
    line-height: 19px;
}

.help {
    width: 98px;
    height: 29px;
    margin: 0 16px 0 auto;
    border: 1px solid #c8c8c8;
    border-radius: 3px;
    background: #fdfdfd;
}

.dismiss {
    align-self: flex-start;
    width: 14px;
    height: 15px;
    margin-top: 9px;
    background: #a8a8a8;
    box-shadow: 0 0 0 2px #fff;
}

.statusbar {
    display: flex;
    align-items: center;
    justify-content: space-between;
    height: 26px;
    padding: 0 27px 0 1px;
    background: var(--chrome);
    border-bottom: 1px solid #b4b8c4;
}

.devices {
    display: flex;
    align-items: center;
    gap: 5px;
}

.devices i {
    height: 21px;
    margin: 0 4px;
    border-left: 1px solid #888;
}

/* Host taskbar */
.host-bar {
    display: grid;
    grid-template-columns: 1fr auto 1fr;
    align-items: center;
    height: 57px;
    padding-left: 2px;
    background: linear-gradient(90deg, #e4eef9, #e0ecf9 25%, #d2e0fa 34%, #d6ddf3 50%, #d5def5 70%, #e2ebf8 85%, #e4eefa);
}

.host-apps {
    grid-column: 2;
    display: flex;
    align-items: center;
}

.app {
    position: relative;
    width: 55px;
    height: 48px;
}

.app.open {
    width: 48px;
    margin: 0 3px 0 4px;
    border-radius: 4px;
    background: #eef3fd;
}

.dot::after,
.open::after {
    content: "";
    position: absolute;
    bottom: 0;
    width: 8px;
    height: 4px;
    border-radius: 2px;
    background: #7d8592;
}

.open::after {
    width: 20px;
    background: #0b67c2;
}

.host-search {
    gap: 8px;
    width: 123px;
    height: 38px;
    margin: 0 5px;
    border-radius: 19px;
    background: #f3f7fe;
}

.onenote,
.excel {
    width: 30px;
    height: 27px;
    background: linear-gradient(90deg, #7227a5 56%, #c678e8 56%);
    color: #fff;
    font-weight: bold;
    text-align: left;
    line-height: 27px;
    padding-left: 3px;
}

.excel {
    width: 28px;
    border: 1px solid #1d6f42;
    background: linear-gradient(90deg, #1a6b3f 58%, #eaf5ee 58%);
    line-height: 25px;
}

.host-tray {
    display: flex;
    align-items: center;
    justify-content: flex-end;
    gap: 10px;
    padding-right: 24px;
}

.host-tray svg:first-child {
    margin-right: 4px;
}

.host-tray .ime {
    margin: 0 14px;
    font-size: 19px;
}

.host-tray svg:nth-child(3) {
    margin-left: 6px;
}

.host-tray time {
    margin-left: 10px;
    font-size: 14px;
    text-align: right;
}

.badge {
    width: 20px;
    height: 20px;
    border-radius: 50%;
    background: #0a5bb5;
    color: #fff;
    font-size: 12px;
    text-align: center;
}

/* Stream overlay */
.overlay {
    position: fixed;
    inset: 0;
    pointer-events: none;
    color: rgba(255, 255, 255, 0.6);
}

.overlay > * {
    position: absolute;
}

.streamer {
    top: 57px;
    left: 282px;
    font-size: 36px;
    font-weight: bold;
    line-height: 36px;
}

.brand {
    top: 40px;
    left: 460px;
    font-family: Roboto, sans-serif;
    font-size: 54px;
    font-weight: bold;
    line-height: 60px;
}

.viewers {
    bottom: 12px;
    left: 208px;
    display: flex;
    align-items: center;
    gap: 14px;
    color: rgba(255, 255, 255, 0.45);
    font-size: 27px;
    line-height: 36px;
}

.phone-left {
    top: 0;
    left: 183px;
}

.phone-right {
    top: 0;
    left: 2167px;
}
```
